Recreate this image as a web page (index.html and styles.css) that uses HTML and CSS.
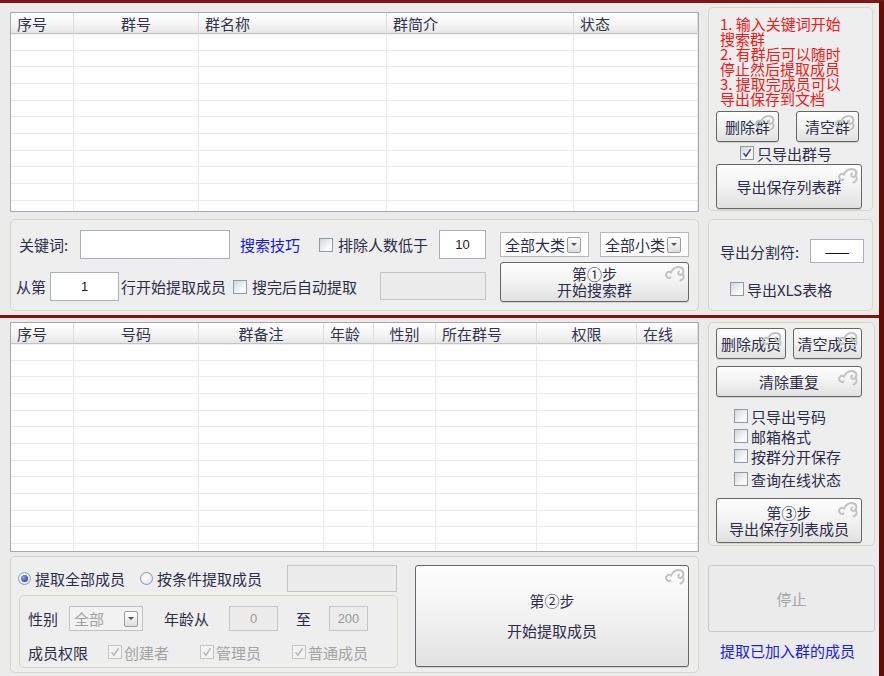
FILE: index.html
```html
<!DOCTYPE html>
<html lang="zh-CN">
<head>
<meta charset="utf-8">
<title>群成员提取</title>
<link rel="stylesheet" href="styles.css">
</head>
<body>
<svg class="defs" width="0" height="0" aria-hidden="true">
  <defs>
    <symbol id="orn" viewBox="0 0 24 18">
      <g fill="none" stroke="#c3c3c3" stroke-width="2" stroke-linecap="round">
        <path d="M7.5 13.5a3 3 0 1 1 0.5-5"/>
        <path d="M8 8.5c1.5-4 6-6.5 10-5a4 4 0 0 1-0.5 7.5a2 2 0 0 1-1.5-3.5"/>
        <path d="M20 10.5c1.5 2 0.5 5-2.5 6"/>
      </g>
    </symbol>
    <symbol id="tick" viewBox="0 0 14 14">
      <path d="M3 7.2l2.7 3.6L11.3 2.6" fill="none" stroke="currentColor" stroke-width="1.6"/>
    </symbol>
  </defs>
</svg>
<div class="window">
  <div class="top">
    <div class="col top-left">
      <div class="grid g1">
        <table>
          <colgroup><col class="w63"><col class="w125"><col class="w188"><col class="w187"><col></colgroup>
          <thead><tr><th>序号</th><th class="ctr">群号</th><th>群名称</th><th>群简介</th><th>状态</th></tr></thead>
          <tbody>
            <tr><td></td><td></td><td></td><td></td><td></td></tr>
            <tr><td></td><td></td><td></td><td></td><td></td></tr>
            <tr><td></td><td></td><td></td><td></td><td></td></tr>
            <tr><td></td><td></td><td></td><td></td><td></td></tr>
            <tr><td></td><td></td><td></td><td></td><td></td></tr>
            <tr><td></td><td></td><td></td><td></td><td></td></tr>
            <tr><td></td><td></td><td></td><td></td><td></td></tr>
            <tr><td></td><td></td><td></td><td></td><td></td></tr>
            <tr><td></td><td></td><td></td><td></td><td></td></tr>
            <tr><td></td><td></td><td></td><td></td><td></td></tr>
            <tr><td></td><td></td><td></td><td></td><td></td></tr>
          </tbody>
        </table>
      </div>
      <div class="panel search">
        <div class="r1">
          <span class="kw-label">关键词:</span>
          <input class="kw" type="text" value="">
          <span class="link">搜索技巧</span>
          <label class="chk low"><span class="cb"></span><span>排除人数低于</span></label>
          <input class="n10" type="text" value="10">
          <div class="sel sel-big"><span>全部大类</span><span class="drop"></span></div>
          <div class="sel sel-small"><span>全部小类</span><span class="drop"></span></div>
        </div>
        <div class="r2">
          <span class="cell from">从第</span>
          <input class="cell start" type="text" value="1">
          <span class="cell rowtext">行开始提取成员</span>
          <label class="cell chk auto"><span class="cb"></span><span>搜完后自动提取</span></label>
          <input class="cell dis-field" type="text" value="" disabled>
          <button class="btn b-step1" type="button"><svg class="orn"><use href="#orn"/></svg><span>第①步</span><span>开始搜索群</span></button>
        </div>
      </div>
    </div>
    <div class="col top-right">
      <div class="panel tips">
        <p class="tips-text">1. 输入关键词开始<br>搜索群<br>2. 有群后可以随时<br>停止然后提取成员<br>3. 提取完成员可以<br>导出保存到文档</p>
        <div class="btnrow">
          <button class="btn b-del" type="button"><svg class="orn"><use href="#orn"/></svg>删除群</button>
          <button class="btn b-clr" type="button"><svg class="orn"><use href="#orn"/></svg>清空群</button>
        </div>
        <label class="chk only-no"><span class="cb"><svg><use href="#tick"/></svg></span><span>只导出群号</span></label>
        <button class="btn b-export" type="button"><svg class="orn"><use href="#orn"/></svg>导出保存列表群</button>
      </div>
      <div class="panel sep">
        <div class="sep-row">
          <span class="sep-label">导出分割符:</span>
          <input class="sep-field" type="text" value="——">
        </div>
        <label class="chk xls"><span class="cb"></span><span>导出XLS表格</span></label>
      </div>
    </div>
  </div>
  <div class="divider"></div>
  <div class="bottom">
    <div class="col bottom-left">
      <div class="grid g2">
        <table>
          <colgroup><col class="w63"><col class="w125"><col class="w125"><col class="w50"><col class="w62"><col class="w101"><col class="w100"><col></colgroup>
          <thead><tr><th>序号</th><th class="ctr">号码</th><th class="ctr">群备注</th><th>年龄</th><th class="ctr">性别</th><th>所在群号</th><th class="ctr">权限</th><th>在线</th></tr></thead>
          <tbody>
            <tr><td></td><td></td><td></td><td></td><td></td><td></td><td></td><td></td></tr>
            <tr><td></td><td></td><td></td><td></td><td></td><td></td><td></td><td></td></tr>
            <tr><td></td><td></td><td></td><td></td><td></td><td></td><td></td><td></td></tr>
            <tr><td></td><td></td><td></td><td></td><td></td><td></td><td></td><td></td></tr>
            <tr><td></td><td></td><td></td><td></td><td></td><td></td><td></td><td></td></tr>
            <tr><td></td><td></td><td></td><td></td><td></td><td></td><td></td><td></td></tr>
            <tr><td></td><td></td><td></td><td></td><td></td><td></td><td></td><td></td></tr>
            <tr><td></td><td></td><td></td><td></td><td></td><td></td><td></td><td></td></tr>
            <tr><td></td><td></td><td></td><td></td><td></td><td></td><td></td><td></td></tr>
            <tr><td></td><td></td><td></td><td></td><td></td><td></td><td></td><td></td></tr>
            <tr><td></td><td></td><td></td><td></td><td></td><td></td><td></td><td></td></tr>
            <tr><td></td><td></td><td></td><td></td><td></td><td></td><td></td><td></td></tr>
            <tr><td></td><td></td><td></td><td></td><td></td><td></td><td></td><td></td></tr>
          </tbody>
        </table>
      </div>
      <div class="panel extract">
        <div class="ex-left">
          <div class="radio-row">
            <label class="radio"><span class="rd on"></span><span>提取全部成员</span></label>
            <label class="radio second"><span class="rd"></span><span>按条件提取成员</span></label>
            <input class="dis-field cond-field" type="text" value="" disabled>
          </div>
          <div class="cond">
            <div class="cond-r1">
              <span class="c-sex">性别</span>
              <div class="sel sel-dis"><span>全部</span><span class="drop"></span></div>
              <span class="c-age">年龄从</span>
              <input class="age-from" type="text" value="0" disabled>
              <span class="c-to">至</span>
              <input class="age-to" type="text" value="200" disabled>
            </div>
            <div class="cond-r2">
              <span class="c-perm">成员权限</span>
              <label class="chk dis"><span class="cb"><svg><use href="#tick"/></svg></span><span>创建者</span></label>
              <label class="chk dis"><span class="cb"><svg><use href="#tick"/></svg></span><span>管理员</span></label>
              <label class="chk dis"><span class="cb"><svg><use href="#tick"/></svg></span><span>普通成员</span></label>
            </div>
          </div>
        </div>
        <button class="btn b-step2" type="button"><svg class="orn"><use href="#orn"/></svg><span>第②步</span><span>开始提取成员</span></button>
      </div>
    </div>
    <div class="col bottom-right">
      <div class="panel members">
        <div class="btnrow">
          <button class="btn b-mdel" type="button"><svg class="orn"><use href="#orn"/></svg>删除成员</button>
          <button class="btn b-mclr" type="button"><svg class="orn"><use href="#orn"/></svg>清空成员</button>
        </div>
        <button class="btn b-dedup" type="button"><svg class="orn"><use href="#orn"/></svg>清除重复</button>
        <div class="opts">
          <label class="chk"><span class="cb"></span><span>只导出号码</span></label>
          <label class="chk"><span class="cb"></span><span>邮箱格式</span></label>
          <label class="chk"><span class="cb"></span><span>按群分开保存</span></label>
          <label class="chk last"><span class="cb"></span><span>查询在线状态</span></label>
        </div>
        <button class="btn b-step3" type="button"><svg class="orn"><use href="#orn"/></svg><span>第③步</span><span>导出保存列表成员</span></button>
      </div>
      <button class="stop" type="button" disabled>停止</button>
      <span class="joined">提取已加入群的成员</span>
    </div>
  </div>
</div>
</body>
</html>
```

FILE: styles.css
```css
* { box-sizing: border-box; margin: 0; padding: 0; }
html, body { width: 884px; height: 676px; overflow: hidden; }
body {
  background: #ebebeb;
  font-family: "Noto Sans CJK SC", "Noto Sans", sans-serif;
  font-size: 15px;
  line-height: 1;
  color: #2c2c48;
}
.defs { position: absolute; width: 0; height: 0; }

.window {
  height: 676px;
  border-top: 3px solid #7d1616;
  border-right: 5px solid #640a0a;
  display: flex;
  flex-direction: column;
}
.top {
  height: 312px;
  display: grid;
  grid-template-columns: 689px 165px;
  column-gap: 9px;
  padding-left: 10px;
}
.divider { height: 3px; background: #8a1111; }
.bottom {
  flex: 1;
  display: grid;
  grid-template-columns: 689px 167px;
  column-gap: 9px;
  padding-left: 10px;
}
.col { display: flex; flex-direction: column; }
.top-left { padding-top: 9px; gap: 7px; }
.top-right { padding-top: 4px; gap: 8px; }
.bottom-left { padding-top: 4px; gap: 4px; }
.bottom-right { padding-top: 4px; }

/* list views */
.grid { border: 1px solid #a7a8b0; background: #fff; overflow: hidden; }
.g1 { height: 200px; }
.g2 { height: 230px; }
table { width: 100%; border-collapse: separate; border-spacing: 0; table-layout: fixed; }
.w50 { width: 50px; }
.w62 { width: 62px; }
.w63 { width: 63px; }
.w100 { width: 100px; }
.w101 { width: 101px; }
.w125 { width: 125px; }
.w187 { width: 187px; }
.w188 { width: 188px; }
thead tr { height: 21px; }
th {
  padding: 0 0 0 6px;
  text-align: left;
  font-weight: 400;
  color: #33334f;
  background: linear-gradient(#ffffff, #f5f5f5 55%, #e6e6e6);
  border-right: 1px solid #dddddd;
  border-bottom: 1px solid #c4c4c4;
  white-space: nowrap;
  overflow: hidden;
}
th.ctr { text-align: center; padding: 0; }
tbody tr { height: 16.67px; }
td { border-right: 1px solid #ebebeb; border-bottom: 1px solid #ebebeb; }
tbody tr:first-child td { border-top: 1px solid #f1f1f1; }

/* panels */
.panel { border: 1px solid #d6d6c6; border-radius: 5px; background: #eeeeee; }

/* form bits */
input {
  font-family: "Liberation Sans", sans-serif;
  font-size: 13px;
  color: #222;
  text-align: center;
  border: 1px solid #a8b1bb;
  background: #fff;
  outline: none;
  flex: none;
}
input:disabled { background: #ececec; border-color: #c4c4c4; color: #9a9a9a; }
.chk { display: flex; align-items: center; gap: 5px; white-space: nowrap; flex: none; }
.cb {
  width: 14px; height: 14px; flex: none;
  border: 1px solid #8f9aa5;
  background: linear-gradient(135deg, #d2d5d9, #f9f9f9 70%);
  display: inline-flex; align-items: center; justify-content: center;
  color: #2f3b88;
}
.cb svg { width: 12px; height: 12px; }
.chk.dis { color: #a3a3a3; gap: 2px; width: 92px; }
.chk.dis .cb { border-color: #c4c4c4; background: #f3f3f3; color: #b4b4b4; }
.rd {
  width: 13px; height: 13px; flex: none; border-radius: 50%;
  border: 1px solid #8e99a5;
  background: radial-gradient(circle at 40% 35%, #ffffff, #d5dde8);
  display: inline-flex; align-items: center; justify-content: center;
}
.rd.on::after {
  content: ""; width: 7px; height: 7px; border-radius: 50%;
  background: radial-gradient(circle at 35% 35%, #8e9cff, #1b2888);
}
.radio { display: flex; align-items: center; gap: 4px; white-space: nowrap; }
.sel {
  display: flex; align-items: center;
  height: 25px; padding-left: 4px;
  background: #fff; border: 1px solid #b8b8b8;
  white-space: nowrap; flex: none;
}
.sel > span:first-child { flex: 1; }
.drop {
  width: 14px; height: 16px; flex: none;
  border: 1px solid #9c9c9c; border-radius: 2px;
  background: linear-gradient(#ffffff, #dedede);
  display: flex; align-items: center; justify-content: center;
  margin-right: 7px;
}
.drop::after {
  content: ""; border-left: 3px solid transparent; border-right: 3px solid transparent;
  border-top: 3px solid #555;
}

.btn {
  position: relative; flex: none;
  display: flex; flex-direction: column; align-items: center; justify-content: center;
  border: 1px solid #676767; border-radius: 3px;
  background: linear-gradient(#fefefe, #f2f2f2 50%, #e1e1e1);
  box-shadow: 0 1px 0 #d2d2d2;
  font-family: inherit; font-size: 15px; line-height: 16px;
  color: #2c2c48;
  overflow: hidden;
}
.orn { position: absolute; top: 1px; right: 1px; width: 24px; height: 18px; }

/* search panel */
.search { height: 92px; padding: 10px 0 0 8px; }
.r1 { display: flex; align-items: center; height: 29px; white-space: nowrap; }
.kw-label { width: 61px; flex: none; }
.kw { width: 150px; height: 29px; }
.link { color: #1616ee; margin-left: 10px; width: 60px; flex: none; }
.chk.low { margin-left: 19px; width: 120px; }
.n10 { width: 47px; height: 29px; }
.sel-big { margin-left: 14px; width: 89px; }
.sel-small { margin-left: 11px; width: 89px; }
.r2 { display: flex; align-items: flex-end; height: 40px; margin-top: 3px; white-space: nowrap; }
.cell { height: 29px; margin-bottom: 1px; display: flex; align-items: center; flex: none; }
.from { margin-left: -3px; width: 34px; }
.start { width: 69px; }
.rowtext { margin-left: 2px; width: 112px; }
.chk.auto { width: 147px; }
.dis-field { width: 106px; }
.search .dis-field { height: 28px; margin-bottom: 2px; }
.b-step1 { margin-left: 14px; width: 189px; height: 40px; }

/* tips panel */
.tips { height: 204px; padding: 8px 0 0 7px; }
.tips-text { color: #ff1414; line-height: 15px; margin-left: 4px; height: 90px; white-space: nowrap; }
.btnrow { display: flex; }
.tips .btnrow { margin-top: 5px; }
.b-del, .b-clr { width: 63px; height: 31px; }
.b-clr { margin-left: 17px; }
.chk.only-no { margin: 2px 0 0 24px; height: 18px; gap: 3px; }
.b-export { margin-top: 2px; width: 146px; height: 45px; }

/* separator panel */
.sep { height: 92px; padding: 19px 0 0 11px; }
.sep-row { display: flex; align-items: center; height: 24px; }
.sep-label { width: 90px; white-space: nowrap; }
.sep-field { width: 54px; height: 24px; font-family: "Noto Sans CJK SC", sans-serif; font-size: 15px; color: #111; }
.chk.xls { margin: 16px 0 0 10px; height: 20px; gap: 3px; }

/* members panel */
.members { height: 224px; padding: 5px 0 0 7px; }
.b-mdel { width: 70px; height: 31px; }
.b-mclr { margin-left: 7px; width: 69px; height: 31px; }
.b-dedup { margin-top: 7px; width: 146px; height: 31px; }
.opts { margin: 9px 0 0 18px; display: flex; flex-direction: column; }
.opts .chk { height: 20px; gap: 3px; }
.opts .chk.last { margin-top: 3px; }
.b-step3 { margin-top: 9px; width: 146px; height: 45px; }
.stop {
  margin-top: 19px; width: 167px; height: 67px;
  border: 1px solid #c9c9c9; border-radius: 3px;
  background: #ececec; color: #a6a6a6;
  font-family: inherit; font-size: 15px;
}
.joined { margin: 11px 0 0 12px; color: #1a1af5; white-space: nowrap; }

/* extract panel */
.extract { height: 117px; display: flex; padding: 8px 0 0 7px; }
.ex-left { width: 380px; display: flex; flex-direction: column; flex: none; }
.radio-row { display: flex; align-items: center; height: 27px; }
.radio.second { margin-left: 15px; }
.cond-field { margin-left: auto; margin-right: 1px; width: 110px; height: 27px; }
.cond {
  margin: 3px 0 0 1px; width: 379px; height: 73px;
  border: 1px solid #d6d6c6; border-radius: 5px;
  padding: 10px 0 0 8px;
}
.cond-r1 { display: flex; align-items: center; height: 25px; white-space: nowrap; }
.c-sex { width: 41px; flex: none; }
.sel-dis { width: 74px; background: #f2f2f2; border-color: #c2c2c2; color: #a0a0a0; }
.sel-dis .drop { margin-right: 4px; }
.c-age { margin-left: 21px; width: 65px; flex: none; }
.age-from { width: 49px; height: 25px; }
.c-to { margin-left: 18px; width: 33px; flex: none; }
.age-to { width: 39px; height: 25px; }
.cond-r2 { display: flex; align-items: center; height: 20px; margin-top: 11px; white-space: nowrap; }
.c-perm { width: 80px; flex: none; }
.b-step2 { margin-left: 17px; width: 274px; height: 102px; line-height: 30px; }
```
